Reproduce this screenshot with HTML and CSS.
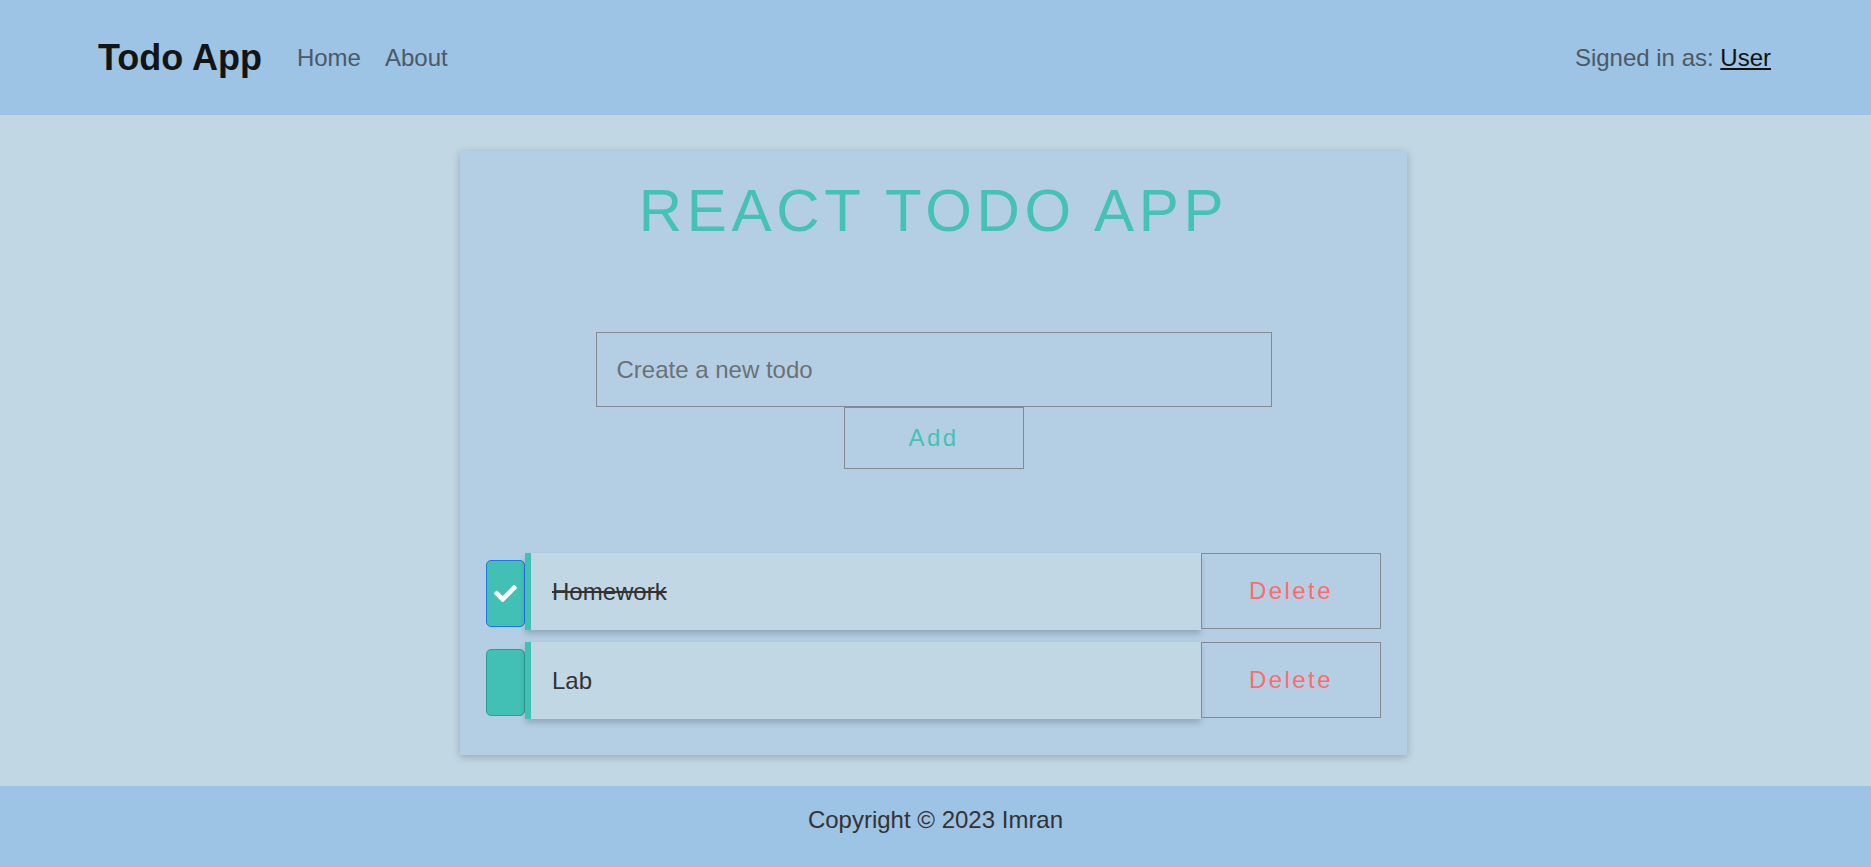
FILE: index.html
```html
<!DOCTYPE html>
<html lang="en">
<head>
<meta charset="utf-8">
<title>Todo App</title>
<link rel="stylesheet" href="styles.css">
</head>
<body>
<header class="navbar">
  <div class="nav-left">
    <a class="brand" href="#">Todo App</a>
    <nav class="links">
      <a href="#">Home</a>
      <a href="#">About</a>
    </nav>
  </div>
  <div class="signed">Signed in as: <a href="#">User</a></div>
</header>
<main class="main">
  <section class="card">
    <h1 class="title">REACT TODO APP</h1>
    <form class="new-todo">
      <input class="todo-input" type="text" placeholder="Create a new todo">
      <button class="add-btn" type="button">Add</button>
    </form>
    <ul class="todos">
      <li class="todo">
        <span class="check checked">
          <svg viewBox="0 0 512 512" width="23" height="23"><path fill="#fff" d="M173.9 439.4l-166.4-166.4c-10-10-10-26.2 0-36.2l36.2-36.2c10-10 26.2-10 36.2 0L192 312.7 432.1 72.6c10-10 26.2-10 36.2 0l36.2 36.2c10 10 10 26.2 0 36.2l-294.4 294.4c-10 10-26.2 10-36.2 0z"/></svg>
        </span>
        <div class="bar"><span class="text done">Homework</span></div>
        <button class="del-btn" type="button">Delete</button>
      </li>
      <li class="todo">
        <span class="check"></span>
        <div class="bar"><span class="text">Lab</span></div>
        <button class="del-btn" type="button">Delete</button>
      </li>
    </ul>
  </section>
</main>
<footer class="footer">Copyright © 2023 Imran</footer>
</body>
</html>
```

FILE: styles.css
```css
* { box-sizing: border-box; }
html, body { margin: 0; padding: 0; }
body {
  font-family: "Liberation Sans", Arial, sans-serif;
  min-height: 100vh;
  display: flex;
  flex-direction: column;
  background: #c1d7e4;
  color: #333;
}
.navbar {
  height: 115px;
  background: #9dc3e5;
  display: flex;
  align-items: center;
  justify-content: space-between;
  padding: 0 100px 0 98px;
}
.nav-left { display: flex; align-items: center; }
.brand {
  font-size: 36px;
  font-weight: bold;
  color: #141414;
  text-decoration: none;
  margin-right: 35px;
}
.links { display: flex; gap: 24px; }
.links a {
  font-size: 24px;
  color: #4c5966;
  text-decoration: none;
}
.signed { font-size: 24px; color: #4c5966; }
.signed a { color: #111; text-decoration: underline; }

.main {
  flex: 1;
  display: flex;
  justify-content: center;
  align-items: flex-start;
  padding-top: 36px;
}
.card {
  width: 947px;
  background: #b4cfe4;
  box-shadow: 0 2px 8px rgba(0, 0, 0, 0.22);
  padding: 25px 26px 36px;
  margin-left: -4px;
}
.title {
  margin: 0;
  text-align: center;
  font-size: 60px;
  line-height: 69px;
  font-weight: normal;
  letter-spacing: 4.7px;
  color: #45c1b6;
}
.new-todo {
  margin-top: 87px;
  display: flex;
  flex-direction: column;
  align-items: center;
}
.todo-input {
  width: 676px;
  height: 75px;
  border: 1px solid #848a94;
  background: transparent;
  padding: 0 20px;
  font-family: inherit;
  font-size: 24px;
  color: #333;
  outline: none;
}
.todo-input::placeholder { color: #6c7175; }
.add-btn {
  width: 180px;
  height: 62px;
  border: 1px solid #848a94;
  background: transparent;
  color: #45c1b6;
  font-family: inherit;
  font-size: 24px;
  letter-spacing: 0.1em;
  padding: 0;
}
.todos {
  list-style: none;
  margin: 84px 0 0;
  padding: 0;
  display: flex;
  flex-direction: column;
  gap: 12px;
}
.todo {
  display: flex;
  align-items: stretch;
  height: 77px;
}
.check {
  width: 39px;
  height: 67px;
  align-self: center;
  margin-top: 3px;
  border-radius: 5px;
  background: #43c0b5;
  border: 1px solid #2f9d93;
  display: flex;
  align-items: center;
  justify-content: center;
}
.check.checked { border-color: #1f74e6; }
.bar {
  flex: 1;
  background: #c1d7e4;
  border-left: 6px solid #43c0b5;
  box-shadow: 0 4px 6px rgba(0, 0, 0, 0.18);
  display: flex;
  align-items: center;
  padding-left: 21px;
}
.text { font-size: 24px; color: #333; }
.text.done { text-decoration: line-through; }
.del-btn {
  width: 180px;
  height: 76px;
  border: 1px solid #848a94;
  background: transparent;
  color: #ff6b6b;
  font-family: inherit;
  font-size: 24px;
  letter-spacing: 0.1em;
  padding: 0;
}
.footer {
  height: 81px;
  background: #9dc3e5;
  text-align: center;
  font-size: 24px;
  color: #333;
  padding-top: 20px;
}
```
